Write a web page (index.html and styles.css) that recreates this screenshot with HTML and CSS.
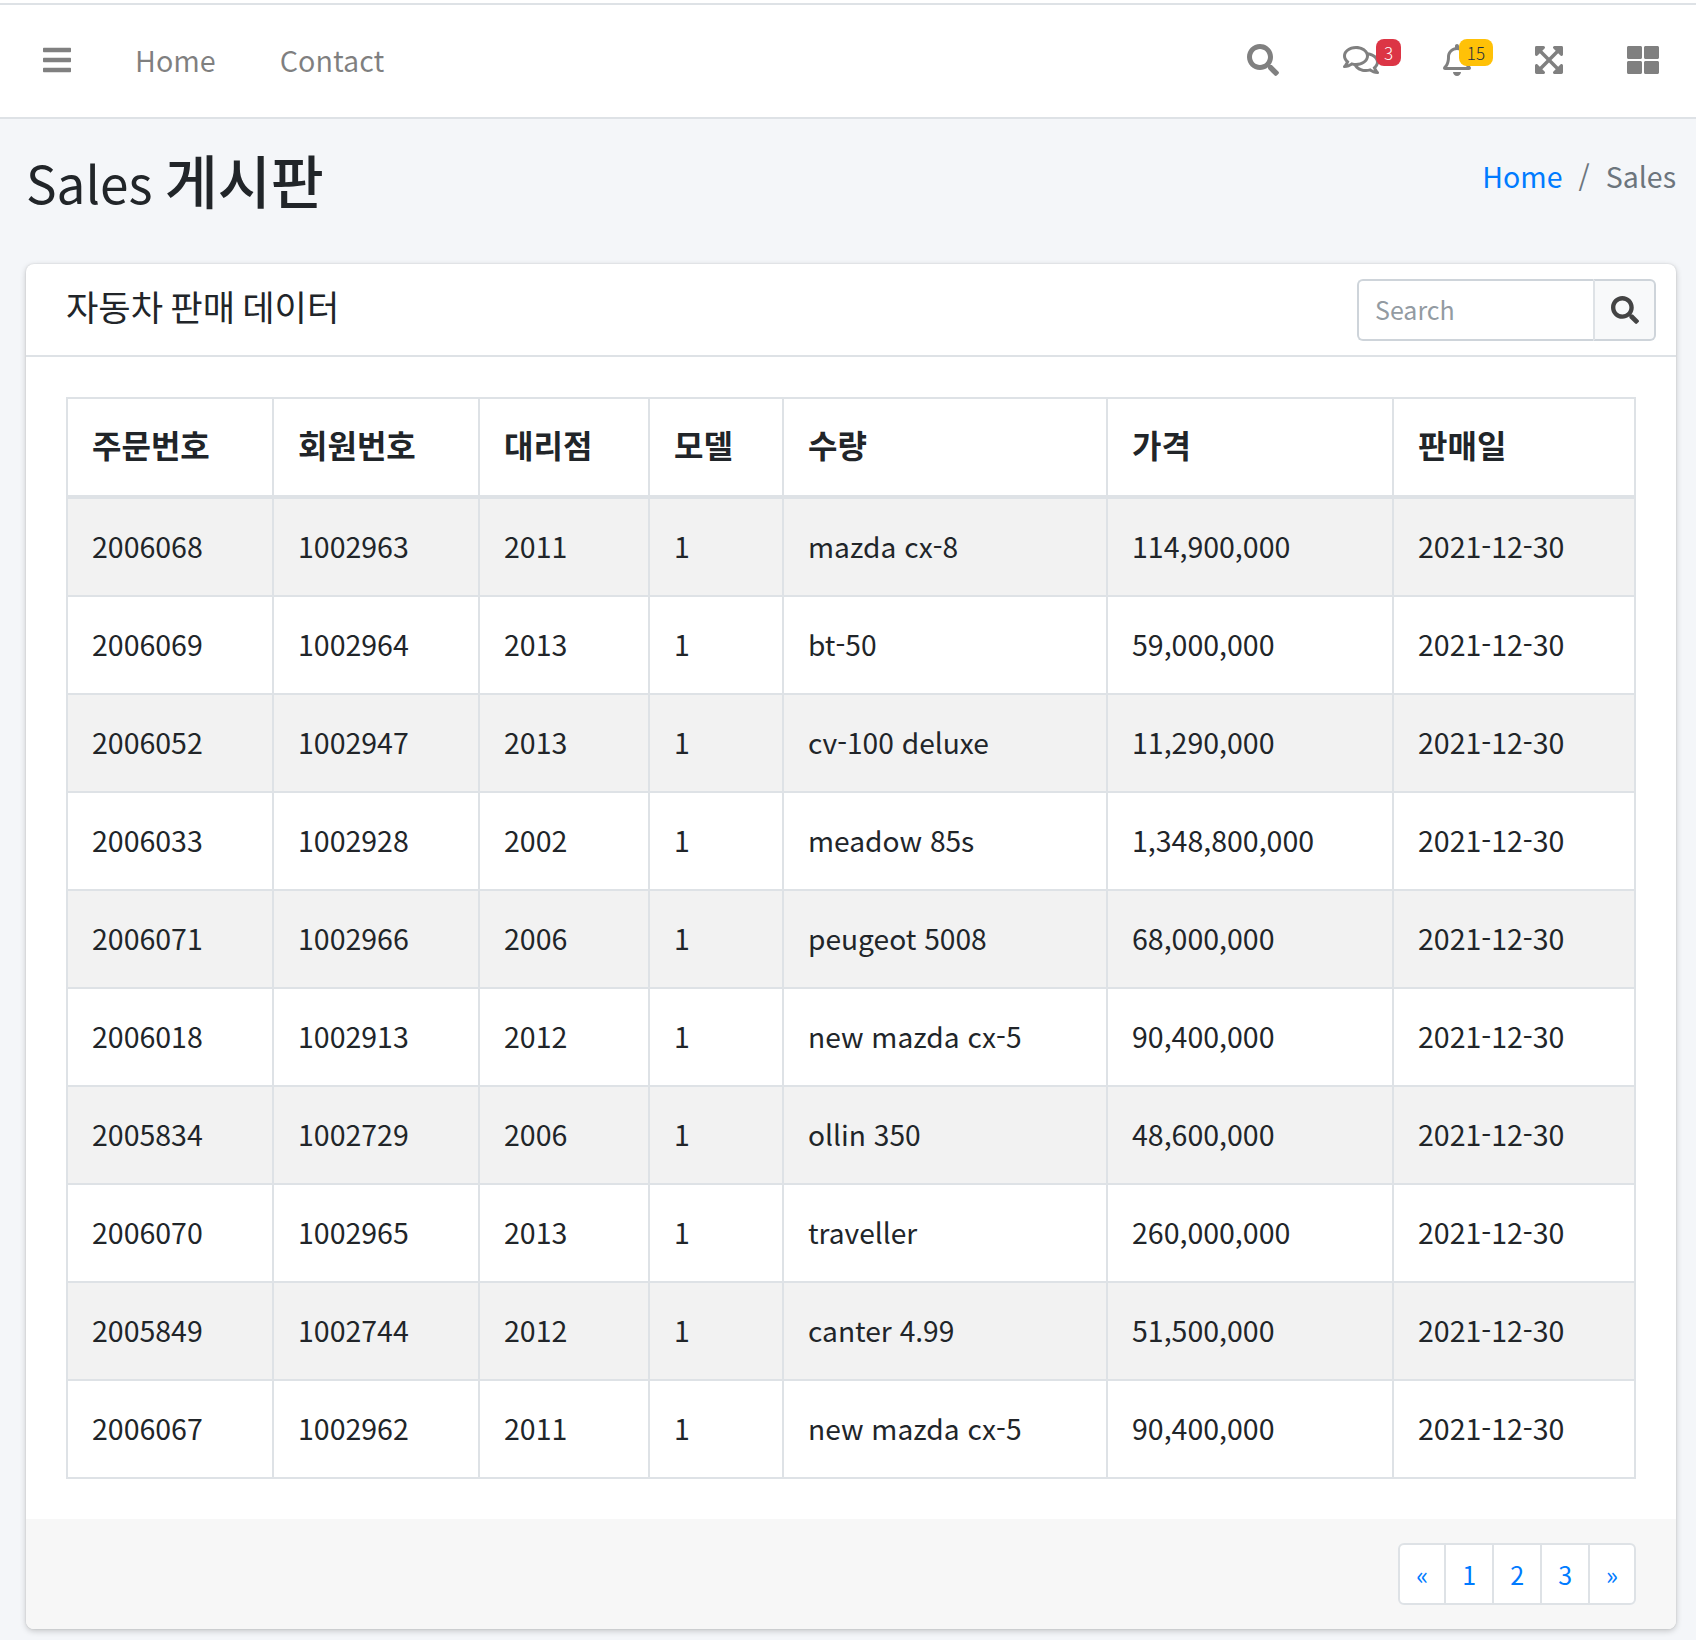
FILE: index.html
```html
<!DOCTYPE html>
<html lang="ko">
<head>
<meta charset="utf-8">
<title>Sales 게시판</title>
<link rel="stylesheet" href="styles.css">
</head>
<body>
<div class="topbar">
<nav class="navbar">
  <ul class="nav-group">
    <li><a class="nav-link" href="#"><svg class="icon i28" viewBox="0 0 448 512"><path d="M16 132h416c8.837 0 16-7.163 16-16V76c0-8.837-7.163-16-16-16H16C7.163 60 0 67.163 0 76v40c0 8.837 7.163 16 16 16zm0 160h416c8.837 0 16-7.163 16-16v-40c0-8.837-7.163-16-16-16H16c-8.837 0-16 7.163-16 16v40c0 8.837 7.163 16 16 16zm0 160h416c8.837 0 16-7.163 16-16v-40c0-8.837-7.163-16-16-16H16c-8.837 0-16 7.163-16 16v40c0 8.837 7.163 16 16 16z"/></svg></a></li>
    <li><a class="nav-link" href="#">Home</a></li>
    <li><a class="nav-link" href="#">Contact</a></li>
  </ul>
  <ul class="nav-group">
    <li><a class="nav-link" href="#"><svg class="icon i32" viewBox="0 0 512 512"><path d="M505 442.7L405.3 343c-4.5-4.5-10.6-7-17-7H372c27.6-35.3 44-79.7 44-128C416 93.1 322.9 0 208 0S0 93.1 0 208s93.1 208 208 208c48.3 0 92.7-16.4 128-44v16.3c0 6.4 2.5 12.5 7 17l99.7 99.7c9.4 9.4 24.6 9.4 33.9 0l28.3-28.3c9.4-9.4 9.4-24.6.1-34zM208 336c-70.7 0-128-57.2-128-128 0-70.7 57.2-128 128-128 70.7 0 128 57.2 128 128 0 70.7-57.2 128-128 128z"/></svg></a></li>
    <li><a class="nav-link" href="#"><svg class="icon i36" viewBox="0 0 576 512"><path d="M532 386.2c27.5-27.1 44-61.1 44-98.2 0-80-76.5-146.1-176.2-157.9C368.3 72.5 294.3 32 208 32 93.1 32 0 103.6 0 192c0 37 16.5 71 44 98.2-15.3 30.7-37.3 54.5-37.7 54.9-6.3 6.7-8.1 16.5-4.4 25 3.6 8.5 12 14 21.2 14 53.5 0 96.7-20.2 125.2-38.8 9.2 2.1 18.7 3.7 28.4 4.9C208.1 407.6 281.8 448 368 448c20.8 0 40.8-2.4 59.8-6.8C456.3 459.7 499.4 480 553 480c9.2 0 17.5-5.5 21.2-14 3.6-8.5 1.9-18.3-4.4-25-.4-.3-22.5-24.1-37.8-54.8zm-392.8-92.3L122.1 305c-14.1 9.1-28.5 16.3-43.1 21.4 2.7-4.7 5.4-9.7 8-14.8l15.5-31.1L77.7 256C64.2 242.6 48 220.7 48 192c0-60.7 73.3-112 160-112s160 51.3 160 112-73.3 112-160 112c-16.5 0-33-1.9-49-5.6l-19.8-4.5zM498.3 352l-24.7 24.4 15.5 31.1c2.6 5.1 5.3 10.1 8 14.8-14.6-5.1-29-12.3-43.1-21.4l-17.1-11.1-19.9 4.6c-16 3.7-32.5 5.6-49 5.6-54 0-102.2-20.1-131.3-49.7C338 339.5 416 272.9 416 192c0-3.4-.4-6.7-.7-10C479.7 196.5 528 238.8 528 288c0 28.7-16.2 50.6-29.7 64z"/></svg><span class="badge badge-red">3</span></a></li>
    <li><a class="nav-link" href="#"><svg class="icon i28" viewBox="0 0 448 512"><path d="M439.39 362.29c-19.32-20.76-55.47-51.99-55.47-154.29 0-77.7-54.48-139.9-127.94-155.16V32c0-17.67-14.32-32-31.98-32s-31.98 14.33-31.98 32v20.84C118.56 68.1 64.08 130.3 64.08 208c0 102.3-36.15 133.53-55.47 154.29-6 6.45-8.66 14.16-8.61 21.71.11 16.4 12.98 32 32.1 32h383.8c19.12 0 32-15.6 32.1-32 .05-7.55-2.61-15.27-8.61-21.71zM67.53 368c21.22-27.97 44.42-74.33 44.53-159.42 0-.2-.06-.38-.06-.58 0-61.86 50.14-112 112-112s112 50.14 112 112c0 .2-.06.38-.06.58.11 85.1 23.31 131.46 44.53 159.42H67.53zM224 512c35.32 0 63.97-28.65 63.97-64H160.03c0 35.35 28.65 64 63.97 64z"/></svg><span class="badge badge-yellow">15</span></a></li>
    <li><a class="nav-link" href="#"><svg class="icon i28" viewBox="0 0 448 512"><path d="M448 344v112a23.94 23.94 0 0 1-24 24H312c-21.39 0-32.09-25.9-17-41l36.2-36.2L224 295.6 116.77 402.9 153 439c15.09 15.1 4.39 41-17 41H24a23.94 23.94 0 0 1-24-24V344c0-21.4 25.89-32.1 41-17l36.19 36.2L184.46 256 77.18 148.7 41 185c-15.1 15.1-41 4.4-41-17V56a23.94 23.94 0 0 1 24-24h112c21.39 0 32.09 25.9 17 41l-36.2 36.2L224 216.4l107.23-107.3L295 73c-15.09-15.1-4.39-41 17-41h112a23.94 23.94 0 0 1 24 24v112c0 21.4-25.89 32.1-41 17l-36.19-36.2L263.54 256l107.28 107.3L407 327.1c15.1-15.2 41-4.5 41 16.9z"/></svg></a></li>
    <li><a class="nav-link" href="#"><svg class="icon i32" viewBox="0 0 512 512"><path d="M296 32h192c13.255 0 24 10.745 24 24v160c0 13.255-10.745 24-24 24H296c-13.255 0-24-10.745-24-24V56c0-13.255 10.745-24 24-24zm-80 0H24C10.745 32 0 42.745 0 56v160c0 13.255 10.745 24 24 24h192c13.255 0 24-10.745 24-24V56c0-13.255-10.745-24-24-24zM0 296v160c0 13.255 10.745 24 24 24h192c13.255 0 24-10.745 24-24V296c0-13.255-10.745-24-24-24H24c-13.255 0-24 10.745-24 24zm272 0v160c0 13.255 10.745 24 24 24h192c13.255 0 24-10.745 24-24V296c0-13.255-10.745-24-24-24H296c-13.255 0-24 10.745-24 24z"/></svg></a></li>
  </ul>
</nav>
</div>

<main class="content">
  <header class="page-header">
    <h1 class="page-title"><span class="title-latin">Sales</span> <span class="title-ko">게시판</span></h1>
    <ol class="breadcrumb">
      <li><a href="#">Home</a></li>
      <li class="crumb-sep">/</li>
      <li class="crumb-active">Sales</li>
    </ol>
  </header>

  <section class="card">
    <div class="card-header">
      <h3 class="card-title">자동차 판매 데이터</h3>
      <form class="search">
        <input class="search-input" type="text" placeholder="Search">
        <button class="search-btn" type="button"><svg class="icon-btn" viewBox="0 0 512 512"><path d="M505 442.7L405.3 343c-4.5-4.5-10.6-7-17-7H372c27.6-35.3 44-79.7 44-128C416 93.1 322.9 0 208 0S0 93.1 0 208s93.1 208 208 208c48.3 0 92.7-16.4 128-44v16.3c0 6.4 2.5 12.5 7 17l99.7 99.7c9.4 9.4 24.6 9.4 33.9 0l28.3-28.3c9.4-9.4 9.4-24.6.1-34zM208 336c-70.7 0-128-57.2-128-128 0-70.7 57.2-128 128-128 70.7 0 128 57.2 128 128 0 70.7-57.2 128-128 128z"/></svg></button>
      </form>
    </div>
    <div class="card-body">
      <table class="data-table">
        <colgroup>
          <col class="c1"><col class="c2"><col class="c3"><col class="c4"><col class="c5"><col class="c6"><col class="c7">
        </colgroup>
        <thead>
          <tr><th>주문번호</th><th>회원번호</th><th>대리점</th><th>모델</th><th>수량</th><th>가격</th><th>판매일</th></tr>
        </thead>
        <tbody>
          <tr><td>2006068</td><td>1002963</td><td>2011</td><td>1</td><td>mazda cx-8</td><td>114,900,000</td><td>2021-12-30</td></tr>
          <tr><td>2006069</td><td>1002964</td><td>2013</td><td>1</td><td>bt-50</td><td>59,000,000</td><td>2021-12-30</td></tr>
          <tr><td>2006052</td><td>1002947</td><td>2013</td><td>1</td><td>cv-100 deluxe</td><td>11,290,000</td><td>2021-12-30</td></tr>
          <tr><td>2006033</td><td>1002928</td><td>2002</td><td>1</td><td>meadow 85s</td><td>1,348,800,000</td><td>2021-12-30</td></tr>
          <tr><td>2006071</td><td>1002966</td><td>2006</td><td>1</td><td>peugeot 5008</td><td>68,000,000</td><td>2021-12-30</td></tr>
          <tr><td>2006018</td><td>1002913</td><td>2012</td><td>1</td><td>new mazda cx-5</td><td>90,400,000</td><td>2021-12-30</td></tr>
          <tr><td>2005834</td><td>1002729</td><td>2006</td><td>1</td><td>ollin 350</td><td>48,600,000</td><td>2021-12-30</td></tr>
          <tr><td>2006070</td><td>1002965</td><td>2013</td><td>1</td><td>traveller</td><td>260,000,000</td><td>2021-12-30</td></tr>
          <tr><td>2005849</td><td>1002744</td><td>2012</td><td>1</td><td>canter 4.99</td><td>51,500,000</td><td>2021-12-30</td></tr>
          <tr><td>2006067</td><td>1002962</td><td>2011</td><td>1</td><td>new mazda cx-5</td><td>90,400,000</td><td>2021-12-30</td></tr>
        </tbody>
      </table>
    </div>
    <div class="card-footer">
      <ul class="pagination">
        <li><a href="#">«</a></li>
        <li><a href="#">1</a></li>
        <li><a href="#">2</a></li>
        <li><a href="#">3</a></li>
        <li><a href="#">»</a></li>
      </ul>
    </div>
  </section>
</main>
</body>
</html>
```
FILE: styles.css
```css
* { box-sizing: border-box; }
html, body { margin: 0; padding: 0; }
body {
  background: #f4f6f9;
  color: #212529;
  font-family: "Noto Sans CJK KR", "Noto Sans", sans-serif;
  font-size: 28.5px;
  line-height: 48px;
  min-height: 1640px;
}
ul, ol { list-style: none; margin: 0; padding: 0; }
a { text-decoration: none; }

.topbar { background: #fff; padding-top: 3px; }
.navbar {
  display: flex;
  align-items: center;
  justify-content: space-between;
  height: 116px;
  background: #fff;
  padding: 0 5px 2px 11px;
  border-top: 2px solid #dee2e6;
  border-bottom: 2px solid #dee2e6;
}
.nav-group { display: flex; align-items: center; }
.nav-link {
  position: relative;
  display: flex;
  align-items: center;
  height: 48px;
  padding: 0 32px;
  color: rgba(0,0,0,.5);
  font-size: 28.7px;
}
.icon { display: block; fill: #808080; height: 32px; }
.i28 { width: 28px; }
.i32 { width: 32px; }
.i36 { width: 36px; }

.badge {
  position: absolute;
  top: 3px;
  right: 10px;
  padding: 2px 8px;
  border-radius: 8px;
  font-size: 17px;
  font-weight: 300;
  line-height: 23px;
}
.badge-red { background: #dc3545; color: #fff; }
.badge-yellow { background: #ffc107; color: #1f2d3d; }

.content { padding: 0 20px 0 26px; }
.page-header {
  display: flex;
  justify-content: space-between;
  align-items: flex-start;
  height: 145px;
  padding-top: 26px;
}
.page-title {
  margin: 0;
  font-size: 51.3px;
  font-weight: 400;
  line-height: 69px;
  word-spacing: -2px;
}
.title-ko { font-size: 57.6px; font-weight: 500; }
.breadcrumb { display: flex; padding-top: 7px; }
.breadcrumb a { color: #007bff; }
.crumb-sep { color: #6c757d; padding: 0 16px; }
.crumb-active { color: #6c757d; }

.card {
  background: #fff;
  border-radius: 8px;
  box-shadow: 0 0 2px rgba(0,0,0,.125), 0 2px 6px rgba(0,0,0,.2);
}
.card-header {
  display: flex;
  justify-content: space-between;
  align-items: flex-start;
  height: 93px;
  padding: 15px 20px 0 40px;
  border-bottom: 2px solid #dee2e6;
}
.card-title {
  margin: 1px 0 0;
  font-size: 35.2px;
  font-weight: 400;
  line-height: 52px;
  word-spacing: -2.7px;
}
.search { display: flex; height: 62px; }
.search-input {
  width: 236px;
  height: 62px;
  padding: 0 16px 2px;
  border: 2px solid #ced4da;
  border-right: 0;
  border-radius: 6px 0 0 6px;
  font: inherit;
  font-size: 25px;
  background: #fff;
}
.search-input::placeholder { color: #939ba2; opacity: 1; }
.search-btn {
  width: 63px;
  height: 62px;
  padding: 0;
  display: flex;
  align-items: center;
  justify-content: center;
  background: #f8f9fa;
  border: 2px solid #ced4da;
  border-left-color: #dee2e6;
  border-radius: 0 6px 6px 0;
}
.icon-btn { width: 28px; height: 28px; fill: #444; display: block; }

.card-body { padding: 40px; }
.data-table {
  width: 1568px;
  table-layout: fixed;
  border-collapse: collapse;
}
.c1, .c2 { width: 206px; }
.c3 { width: 170px; }
.c4 { width: 134px; }
.c5 { width: 324px; }
.c6 { width: 286px; }
.c7 { width: 242px; }
.data-table th, .data-table td {
  border: 2px solid #dee2e6;
  text-align: left;
  vertical-align: top;
  line-height: 48px;
}
.data-table td { padding: 23px 24px 25px; }
.data-table td:nth-child(5) { font-size: 28.15px; }
.data-table th {
  padding: 21px 24px 27px;
  font-size: 32px;
  font-weight: 700;
  border-bottom-width: 4px;
}
.data-table tbody tr:nth-child(odd) { background: #f2f2f2; }

.card-footer {
  display: flex;
  justify-content: flex-end;
  background: #f7f7f7;
  padding: 24px 40px;
  border-radius: 0 0 8px 8px;
}
.pagination { display: flex; }
.pagination li { margin-left: -2px; }
.pagination li:first-child { margin-left: 0; }
.pagination a {
  display: block;
  height: 62px;
  padding: 0 16px;
  background: #fff;
  border: 2px solid #dee2e6;
  color: #007bff;
  font-size: 25px;
  line-height: 58px;
}
.pagination li:first-child a { border-radius: 6px 0 0 6px; }
.pagination li:last-child a { border-radius: 0 6px 6px 0; }
```
